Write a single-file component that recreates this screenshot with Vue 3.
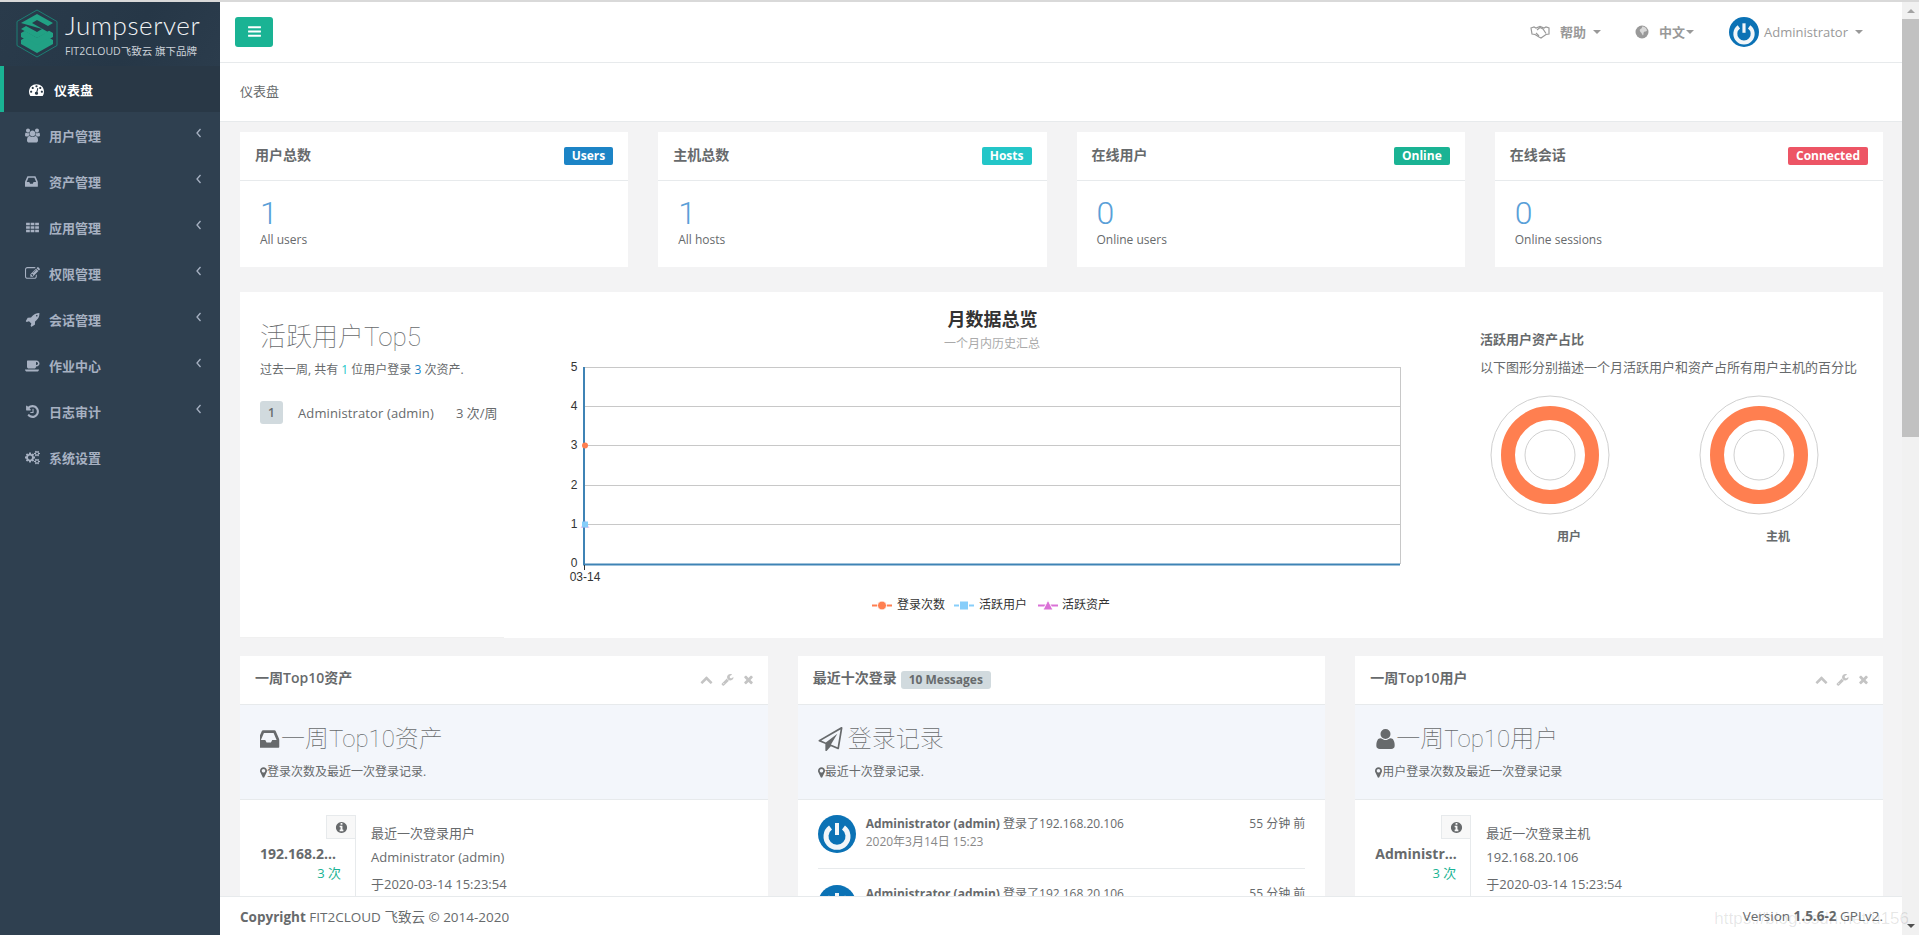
<script setup>
// FontAwesome 4 glyphs, 1792 grid
const fa = {
  dashboard: 'M384 1152q0-53-37.5-90.5t-90.5-37.5-90.5 37.5-37.5 90.5 37.5 90.5 90.5 37.5 90.5-37.5 37.5-90.5zm192-448q0-53-37.5-90.5t-90.5-37.5-90.5 37.5-37.5 90.5 37.5 90.5 90.5 37.5 90.5-37.5 37.5-90.5zm428 481l101-382q6-26-7.5-48.5t-38.5-29.5-48 6.5-30 39.5l-101 382q-60 5-107 43.5t-63 98.5q-20 77 20 146t117 89 146-20 89-117q16-60-6-117t-72-91zm660-33q0-53-37.5-90.5t-90.5-37.5-90.5 37.5-37.5 90.5 37.5 90.5 90.5 37.5 90.5-37.5 37.5-90.5zm-640-640q0-53-37.5-90.5t-90.5-37.5-90.5 37.5-37.5 90.5 37.5 90.5 90.5 37.5 90.5-37.5 37.5-90.5zm448 192q0-53-37.5-90.5t-90.5-37.5-90.5 37.5-37.5 90.5 37.5 90.5 90.5 37.5 90.5-37.5 37.5-90.5zm320 448q0 261-141 483-19 29-54 29h-1402q-35 0-54-29-141-221-141-483 0-182 71-348t191-286 286-191 348-71 348 71 286 191 191 286 71 348z',
  users: 'M593 896q-162 5-265 128h-134q-82 0-138-40.5t-56-118.5q0-353 124-353 6 0 43.5 21t97.5 42.5 119 21.5q67 0 133-23-5 37-5 66 0 139 81 256zm1071 637q0 120-73 189.5t-194 69.5h-874q-121 0-194-69.5t-73-189.5q0-53 3.5-103.5t14-109 26.5-108.5 43-97.5 62-81 85.5-53.5 111.5-20q10 0 43 21.5t73 48 107 48 135 21.5 135-21.5 107-48 73-48 43-21.5q61 0 111.5 20t85.5 53.5 62 81 43 97.5 26.5 108.5 14 109 3.5 103.5zm-1024-1277q0 106-75 181t-181 75-181-75-75-181 75-181 181-75 181 75 75 181zm704 384q0 159-112.5 271.5t-271.5 112.5-271.5-112.5-112.5-271.5 112.5-271.5 271.5-112.5 271.5 112.5 112.5 271.5zm576 225q0 78-56 118.5t-138 40.5h-134q-103-123-265-128 81-117 81-256 0-29-5-66 66 23 133 23 59 0 119-21.5t97.5-42.5 43.5-21q124 0 124 353zm-128-609q0 106-75 181t-181 75-181-75-75-181 75-181 181-75 181 75 75 181z',
  inbox: 'M1023 960h316q-1-3-2.5-8.5t-2.5-7.5l-212-496h-708l-212 496q-1 3-2.5 8.5t-2.5 7.5h316l95 192h320zm513 30v482q0 26-19 45t-45 19h-1408q-26 0-45-19t-19-45v-482q0-62 25-123l238-552q10-25 36.5-42t52.5-17h832q26 0 52.5 17t36.5 42l238 552q25 61 25 123z',
  th: 'M128 320h448v320h-448zM672 320h448v320h-448zM1216 320h448v320h-448zM128 736h448v320h-448zM672 736h448v320h-448zM1216 736h448v320h-448zM128 1152h448v320h-448zM672 1152h448v320h-448zM1216 1152h448v320h-448z',
  edit: 'M888 1184l116-116-152-152-116 116v56h96v96h56zm440-720q-16-16-33 1l-350 350q-17 17-1 33t33-1l350-350q17-17 1-33zm80 594v190q0 119-84.5 203.5t-203.5 84.5h-832q-119 0-203.5-84.5t-84.5-203.5v-832q0-119 84.5-203.5t203.5-84.5h832q63 0 117 25 15 7 18 23 3 17-9 29l-49 49q-14 14-32 8-23-6-45-6h-832q-66 0-113 47t-47 113v832q0 66 47 113t113 47h832q66 0 113-47t47-113v-126q0-13 9-22l64-64q15-15 35-7t20 29zm-96-738l288 288-672 672h-288v-288zm444 132l-92 92-288-288 92-92q28-28 68-28t68 28l152 152q28 28 28 68t-28 68z',
  rocket: 'M1504 448q0-40-28-68t-68-28-68 28-28 68 28 68 68 28 68-28 28-68zm224-288q0 249-75.5 430.5t-253.5 360.5q-81 80-195 176l-20 379q-2 16-16 26l-384 224q-7 4-16 4-12 0-23-9l-64-64q-13-14-8-32l85-276-281-281-276 85q-3 1-9 1-14 0-23-9l-64-64q-17-19-5-39l224-384q10-14 26-16l379-20q96-114 176-195 188-187 358-258t431-71q14 0 24 9.5t10 22.5z',
  coffee: 'M1600 640q0-80-56-136t-136-56h-64v384h64q80 0 136-56t56-136zm-1664 768h1792q0 106-75 181t-181 75h-1280q-106 0-181-75t-75-181zm1856-768q0 159-112.5 271.5t-271.5 112.5h-64v32q0 92-66 158t-158 66h-704q-92 0-158-66t-66-158v-736q0-26 19-45t45-19h1152q159 0 271.5 112.5t112.5 271.5z',
  history: 'M1664 896q0 156-61 298t-164 245-245 164-298 61q-172 0-327-72.5t-264-204.5q-7-10-6.5-22.5t8.5-20.5l137-138q10-9 25-9 16 2 23 12 73 95 179 147t225 52q104 0 198.5-40.5t163.5-109.5 109.5-163.5 40.5-198.5-40.5-198.5-109.5-163.5-163.5-109.5-198.5-40.5q-98 0-188 35.5t-160 101.5l137 138q31 30 14 69-17 40-59 40h-448q-26 0-45-19t-19-45v-448q0-42 40-59 39-17 69 14l130 129q107-101 244.5-156.5t284.5-55.5q156 0 298 61t245 164 164 245 61 298zm-640-288v448q0 14-9 23t-23 9h-320q-14 0-23-9t-9-23v-64q0-14 9-23t23-9h224v-352q0-14 9-23t23-9h64q14 0 23 9t9 23z',
  cogs: 'M896 896q0-106-75-181t-181-75-181 75-75 181 75 181 181 75 181-75 75-181zm768 512q0-52-38-90t-90-38-90 38-38 90q0 53 37.5 90.5t90.5 37.5 90.5-37.5 37.5-90.5zm0-1024q0-52-38-90t-90-38-90 38-38 90q0 53 37.5 90.5t90.5 37.5 90.5-37.5 37.5-90.5zm-384 421v185q0 10-7 19.5t-16 10.5l-155 24q-11 35-32 76 34 48 90 115 7 11 7 20 0 12-7 19-23 30-82.5 89.5t-78.5 59.5q-11 0-21-7l-115-90q-37 19-77 31-11 108-23 155-7 24-30 24h-186q-11 0-20-7.5t-10-17.5l-23-153q-34-10-75-31l-118 89q-7 7-20 7-11 0-21-8-144-133-144-160 0-9 7-19 10-14 41-53t47-61q-23-44-35-82l-152-24q-10-1-17-9.5t-7-19.5v-185q0-10 7-19.5t16-10.5l155-24q11-35 32-76-34-48-90-115-7-11-7-20 0-12 7-20 22-30 82-89t79-59q11 0 21 7l115 90q34-18 77-32 11-108 23-154 7-24 30-24h186q11 0 20 7.5t10 17.5l23 153q34 10 75 31l118-89q8-7 20-7 11 0 21 8 144 133 144 160 0 8-7 19-12 16-42 54t-45 60q23 48 34 82l152 23q10 2 17 10.5t7 19.5zm640 533v140q0 16-149 31-12 27-30 52 51 113 51 138 0 4-4 7-122 71-124 71-8 0-46-47t-52-68q-20 2-30 2t-30-2q-14 21-52 68t-46 47q-2 0-124-71-4-3-4-7 0-25 51-138-18-25-30-52-149-15-149-31v-140q0-16 149-31 13-29 30-52-51-113-51-138 0-4 4-7 4-2 35-20t59-34 30-16q8 0 46 46.5t52 67.5q20-2 30-2t30 2q51-71 92-112l6-2q4 0 124 70 4 3 4 7 0 25-51 138 17 23 30 52 149 15 149 31zm0-1024v140q0 16-149 31-12 27-30 52 51 113 51 138 0 4-4 7-122 71-124 71-8 0-46-47t-52-68q-20 2-30 2t-30-2q-14 21-52 68t-46 47q-2 0-124-71-4-3-4-7 0-25 51-138-18-25-30-52-149-15-149-31v-140q0-16 149-31 13-29 30-52-51-113-51-138 0-4 4-7 4-2 35-20t59-34 30-16q8 0 46 46.5t52 67.5q20-2 30-2t30 2q51-71 92-112l6-2q4 0 124 70 4 3 4 7 0 25-51 138 17 23 30 52 149 15 149 31z',
  bars: 'M1664 1344v128q0 26-19 45t-45 19h-1408q-26 0-45-19t-19-45v-128q0-26 19-45t45-19h1408q26 0 45 19t19 45zm0-512v128q0 26-19 45t-45 19h-1408q-26 0-45-19t-19-45v-128q0-26 19-45t45-19h1408q26 0 45 19t19 45zm0-512v128q0 26-19 45t-45 19h-1408q-26 0-45-19t-19-45v-128q0-26 19-45t45-19h1408q26 0 45 19t19 45z',
  up: 'M1683 1331l-166 165q-19 19-45 19t-45-19l-531-531-531 531q-19 19-45 19t-45-19l-166-165q-19-19-19-45.5t19-45.5l742-741q19-19 45-19t45 19l742 741q19 19 19 45.5t-19 45.5z',
  wrench: 'M448 1472q0-26-19-45t-45-19-45 19-19 45 19 45 45 19 45-19 19-45zm644-420l-682 682q-37 37-90 37-52 0-91-37l-106-108q-38-36-38-90 0-53 38-91l681-681q39 98 114.5 173.5t173.5 114.5zm634-435q0 39-23 106-47 134-164.5 217.5t-258.5 83.5q-185 0-316.5-131.5t-131.5-316.5 131.5-316.5 316.5-131.5q58 0 121.5 16.5t107.5 46.5q16 11 16 28t-16 28l-293 169v224l193 107q5-3 79-48.5t135.5-81 70.5-35.5q15 0 23.5 10t8.5 25z',
  times: 'M1490 1322q0 40-28 68l-136 136q-28 28-68 28t-68-28l-294-294-294 294q-28 28-68 28t-68-28l-136-136q-28-28-28-68t28-68l294-294-294-294q-28-28-28-68t28-68l136-136q28-28 68-28t68 28l294 294 294-294q28-28 68-28t68 28l136 136q28 28 28 68t-28 68l-294 294 294 294q28 28 28 68z',
  info: 'M1152 1376v-160q0-14-9-23t-23-9h-96v-512q0-14-9-23t-23-9h-320q-14 0-23 9t-9 23v160q0 14 9 23t23 9h96v320h-96q-14 0-23 9t-9 23v160q0 14 9 23t23 9h448q14 0 23-9t9-23zm-128-896v-160q0-14-9-23t-23-9h-192q-14 0-23 9t-9 23v160q0 14 9 23t23 9h192q14 0 23-9t9-23zm640 416q0 209-103 385.5t-279.5 279.5-385.5 103-385.5-103-279.5-279.5-103-385.5 103-385.5 279.5-279.5 385.5-103 385.5 103 279.5 279.5 103 385.5z',
  marker: 'M1152 640q0-106-75-181t-181-75-181 75-75 181 75 181 181 75 181-75 75-181zm256 0q0 109-33 179l-364 774q-16 33-47.5 52t-67.5 19-67.5-19-46.5-52l-365-774q-33-70-33-179 0-212 150-362t362-150 362 150 150 362z',
  plane: 'M1764 11q33 24 27 64l-256 1536q-5 29-32 45-14 8-31 8-11 0-24-5l-527-215-298 327q-18 21-47 21-14 0-23-4-19-7-30-23.5t-11-36.5v-452l-472-193q-37-14-40-55-3-39 32-59l1664-960q35-21 68 2zm-342 1499l221-1323-1434 827 336 137 863-639-478 797z',
  user: 'M1600 1405q0 120-73 189.5t-194 69.5h-874q-121 0-194-69.5t-73-189.5q0-53 3.5-103.5t14-109 26.5-108.5 43-97.5 62-81 85.5-53.5 111.5-20q9 0 42 21.5t74.5 48 108 48 133.5 21.5 133.5-21.5 108-48 74.5-48 42-21.5q61 0 111.5 20t85.5 53.5 62 81 43 97.5 26.5 108.5 14 109 3.5 103.5zm-320-893q0 159-112.5 271.5t-271.5 112.5-271.5-112.5-112.5-271.5 112.5-271.5 271.5-112.5 271.5 112.5 112.5 271.5z',
}

const menu = [
  { name: '用户管理', icon: 'users', box: '0 0 1920 1792' },
  { name: '资产管理', icon: 'inbox' },
  { name: '应用管理', icon: 'th' },
  { name: '权限管理', icon: 'edit' },
  { name: '会话管理', icon: 'rocket' },
  { name: '作业中心', icon: 'coffee', box: '-64 0 1920 1792' },
  { name: '日志审计', icon: 'history' },
  { name: '系统设置', icon: 'cogs', box: '0 0 1920 1792', leaf: true },
]

const stats = [
  { title: '用户总数', tag: 'Users', color: '#1c84c6', value: 1, note: 'All users' },
  { title: '主机总数', tag: 'Hosts', color: '#23c6c8', value: 1, note: 'All hosts' },
  { title: '在线用户', tag: 'Online', color: '#1ab394', value: 0, note: 'Online users' },
  { title: '在线会话', tag: 'Connected', color: '#ed5565', value: 0, note: 'Online sessions' },
]

// y position of each value on the chart
const axis = [
  { label: '5', y: 15.5 },
  { label: '4', y: 54.5 },
  { label: '3', y: 93.5 },
  { label: '2', y: 133.5 },
  { label: '1', y: 172.5 },
]

const donuts = ['用户', '主机']

const logins = [1, 2]
</script>

<template>
  <div class="page">
    <aside class="sidebar">
      <div class="brand">
        <svg class="brand-logo" viewBox="0 0 46 54">
          <path d="M23 4l20 11.500v24L23 51 3 39.500v-24z" fill="none" stroke="#1c7f74" stroke-width="1" />
          <path d="M7 27l4-2.300 12 7 12-7 4 2.300v4L23 40 7 31z" fill="#21a184" />
          <path d="M7 34l4-2.300 12 7 12-7 4 2.300v4L23 47 7 38z" fill="#21a184" />
          <path d="M23 8l16 9-5 3-11-6-5 3 16 9-11 6-16-9 5-3 11 6 5-3L7 17z" fill="#21a184" />
        </svg>
        <div class="brand-text">
          <div class="brand-name">Jumpserver</div>
          <div class="brand-sub">FIT2CLOUD飞致云 旗下品牌</div>
        </div>
      </div>
      <a class="nav-item active">
        <svg class="nav-icon" viewBox="0 0 1792 1792"><path :d="fa.dashboard" /></svg>
        <span>仪表盘</span>
      </a>
      <a v-for="item in menu" :key="item.name" class="nav-item">
        <svg class="nav-icon" :viewBox="item.box || '0 0 1792 1792'"><path :d="fa[item.icon]" /></svg>
        <span>{{ item.name }}</span>
        <svg v-if="!item.leaf" class="nav-arrow" viewBox="0 0 6 10"><path d="M4.500 1L1 5l3.500 4" /></svg>
      </a>
    </aside>

    <div class="main">
      <header class="topbar">
        <button class="toggle">
          <svg viewBox="0 0 1792 1792"><path :d="fa.bars" /></svg>
        </button>
        <div class="top-links">
          <a class="top-link help">
            <svg class="shake" viewBox="0 0 20 14">
              <path d="M1 3l3-1 2 1 4-1.500L14 3l2-1 3 1v6l-3 .5-5 3.500-2-1-4-2.500-3-.5z" />
              <path d="M7 5l3-2.500 3 1.500 3 4.500M6 8l3 3" />
            </svg>
            <b>帮助</b><i class="caret"></i>
          </a>
          <a class="top-link lang">
            <svg class="globe" viewBox="0 0 14 14">
              <circle cx="7" cy="7" r="6.500" fill="#999" />
              <path d="M7 1.500c2.500 0 4.500 1.500 5 4-1 1.500-2 .5-3 1.500s0 2-1 3.500c-1-1-1-2-2-3S4 5 5.500 4 7 3 7 1.500z" fill="#d9d9d9" />
            </svg>
            <b>中文</b><i class="caret tight"></i>
          </a>
          <a class="top-link account">
            <svg class="avatar small" viewBox="0 0 38 38">
              <circle cx="19" cy="19" r="19" fill="#0b72b5" />
              <path d="M12.500 12.500a11 11 0 1 0 13 0" fill="none" stroke="#f2f6f9" stroke-width="5" />
              <path d="M19 8v12" stroke="#f2f6f9" stroke-width="4" />
            </svg>
            <span>Administrator</span><i class="caret"></i>
          </a>
        </div>
      </header>

      <div class="crumb">仪表盘</div>

      <div class="content">
        <section class="stat-row">
          <div v-for="card in stats" :key="card.tag" class="card">
            <div class="card-head">
              <strong>{{ card.title }}</strong>
              <span class="tag" :style="{ background: card.color }">{{ card.tag }}</span>
            </div>
            <div class="card-body">
              <div class="big-num">{{ card.value }}</div>
              <small>{{ card.note }}</small>
            </div>
          </div>
        </section>

        <section class="overview">
          <div class="top-users">
            <h2>活跃用户Top5</h2>
            <p>过去一周, 共有 <span class="cyan">1</span> 位用户登录 <span class="blue">3</span> 次资产.</p>
            <div class="top-row">
              <span class="rank">1</span>
              <span class="top-name">Administrator (admin)</span>
              <span>3 次/周</span>
            </div>
          </div>

          <div class="chart">
            <h3>月数据总览</h3>
            <div class="chart-sub">一个月内历史汇总</div>
            <svg class="chart-svg" width="920" height="270" viewBox="0 0 920 270">
              <g v-for="tick in axis" :key="tick.label">
                <line x1="53" x2="869" :y1="tick.y" :y2="tick.y" stroke="#c8c8c8" />
                <text x="43" :y="tick.y + 3" text-anchor="middle">{{ tick.label }}</text>
              </g>
              <line x1="869.500" x2="869.500" y1="15" y2="212" stroke="#c8c8c8" />
              <line x1="53" x2="53" y1="15" y2="213" stroke="#3f83b5" stroke-width="2" />
              <line x1="52" x2="869" y1="212.500" y2="212.500" stroke="#3f83b5" stroke-width="2" />
              <line x1="53.500" x2="53.500" y1="213" y2="218" stroke="#333" />
              <text x="43" y="215" text-anchor="middle">0</text>
              <text x="54" y="229" text-anchor="middle">03-14</text>
              <circle cx="54" cy="93.500" r="3" fill="#ff7f50" />
              <path d="M54 168l4.500 8h-9z" fill="#da70d6" opacity=".4" />
              <rect x="51" y="169.500" width="6" height="6" fill="#87cefa" />

              <g stroke-width="2">
                <line x1="341" x2="361" y1="253.500" y2="253.500" stroke="#ff7f50" />
                <line x1="423" x2="443" y1="253.500" y2="253.500" stroke="#87cefa" />
                <line x1="507" x2="527" y1="253.500" y2="253.500" stroke="#da70d6" />
              </g>
              <circle cx="351" cy="253.500" r="4.500" fill="#ff7f50" stroke="#fff" />
              <rect x="428.500" y="249" width="9" height="9" fill="#87cefa" stroke="#fff" />
              <path d="M517 248l5 10h-10z" fill="#da70d6" stroke="#fff" />
              <text x="366" y="257">登录次数</text>
              <text x="448" y="257">活跃用户</text>
              <text x="531" y="257">活跃资产</text>
            </svg>
          </div>

          <div class="ratio">
            <strong>活跃用户资产占比</strong>
            <p>以下图形分别描述一个月活跃用户和资产占所有用户主机的百分比</p>
            <div class="donuts">
              <figure v-for="name in donuts" :key="name">
                <svg width="120" height="120" viewBox="0 0 120 120">
                  <circle cx="60" cy="60" r="59" fill="none" stroke="#d0d0d0" />
                  <circle cx="60" cy="60" r="42" fill="none" stroke="#ff7f50" stroke-width="14" />
                  <circle cx="60" cy="60" r="25" fill="none" stroke="#d0d0d0" />
                </svg>
                <figcaption>{{ name }}</figcaption>
              </figure>
            </div>
          </div>
        </section>

        <section class="panel-row">
          <div class="panel">
            <div class="panel-head">
              <strong>一周Top10资产</strong>
              <div class="tools">
                <svg viewBox="0 0 1792 1792"><path :d="fa.up" /></svg>
                <svg viewBox="0 0 1792 1792"><path :d="fa.wrench" /></svg>
                <svg viewBox="0 0 1792 1792"><path :d="fa.times" /></svg>
              </div>
            </div>
            <div class="panel-intro">
              <h2><svg viewBox="128 256 1536 1280"><path :d="fa.inbox" /></svg>一周Top10资产</h2>
              <small><svg viewBox="384 128 1024 1536"><path :d="fa.marker" /></svg>登录次数及最近一次登录记录.</small>
            </div>
            <div class="record">
              <div class="record-side">
                <div class="record-info"><svg viewBox="0 0 1792 1792"><path :d="fa.info" /></svg></div>
                <div class="record-name">192.168.20.106</div>
                <div class="record-count">3 次</div>
              </div>
              <div class="record-main">
                <p>最近一次登录用户</p>
                <p>Administrator (admin)</p>
                <p class="when">于2020-03-14 15:23:54</p>
              </div>
            </div>
          </div>

          <div class="panel">
            <div class="panel-head">
              <strong>最近十次登录</strong>
              <span class="msg-tag">10 Messages</span>
            </div>
            <div class="panel-intro">
              <h2><svg class="plane" viewBox="0 0 1792 1792"><path :d="fa.plane" /></svg>登录记录</h2>
              <small><svg viewBox="384 128 1024 1536"><path :d="fa.marker" /></svg>最近十次登录记录.</small>
            </div>
            <div class="feed">
              <div v-for="n in logins" :key="n" class="feed-item">
                <svg class="avatar" viewBox="0 0 38 38">
                  <circle cx="19" cy="19" r="19" fill="#0b72b5" />
                  <path d="M12.500 12.500a11 11 0 1 0 13 0" fill="none" stroke="#f2f6f9" stroke-width="5" />
                  <path d="M19 8v12" stroke="#f2f6f9" stroke-width="4" />
                </svg>
                <div class="feed-text">
                  <div class="feed-line">
                    <span><strong>Administrator (admin)</strong> 登录了192.168.20.106</span>
                    <span>55 分钟 前</span>
                  </div>
                  <div class="feed-date">2020年3月14日 15:23</div>
                </div>
              </div>
            </div>
          </div>

          <div class="panel">
            <div class="panel-head">
              <strong>一周Top10用户</strong>
              <div class="tools">
                <svg viewBox="0 0 1792 1792"><path :d="fa.up" /></svg>
                <svg viewBox="0 0 1792 1792"><path :d="fa.wrench" /></svg>
                <svg viewBox="0 0 1792 1792"><path :d="fa.times" /></svg>
              </div>
            </div>
            <div class="panel-intro">
              <h2><svg viewBox="128 128 1536 1536"><path :d="fa.user" /></svg>一周Top10用户</h2>
              <small><svg viewBox="384 128 1024 1536"><path :d="fa.marker" /></svg>用户登录次数及最近一次登录记录</small>
            </div>
            <div class="record">
              <div class="record-side">
                <div class="record-info"><svg viewBox="0 0 1792 1792"><path :d="fa.info" /></svg></div>
                <div class="record-name">Administrator (admin)</div>
                <div class="record-count">3 次</div>
              </div>
              <div class="record-main">
                <p>最近一次登录主机</p>
                <p>192.168.20.106</p>
                <p class="when">于2020-03-14 15:23:54</p>
              </div>
            </div>
          </div>
        </section>
      </div>

      <footer class="footer">
        <div><strong>Copyright</strong> FIT2CLOUD 飞致云 © 2014-2020</div>
        <div>Version <strong>1.5.6-2</strong> GPLv2.</div>
      </footer>
    </div>

    <div class="scrollbar">
      <i class="arrow-up"></i>
      <div class="thumb"></div>
      <i class="arrow-down"></i>
    </div>

    <div class="watermark">https://blog.csdn.net/u156</div>
  </div>
</template>

<style scoped>
.page {
  position: relative;
  display: flex;
  height: 935px;
  box-sizing: border-box;
  border-top: 2px solid #d9d9d9;
  overflow: hidden;
  background: #f3f3f4;
  color: #676a6c;
  font-family: "Open Sans", "Noto Sans CJK SC", sans-serif;
  font-size: 13px;
}

/* sidebar */
.sidebar {
  width: 220px;
  flex: none;
  background: #2f4050;
}
.brand {
  display: flex;
  align-items: flex-start;
  height: 64px;
  box-sizing: border-box;
  padding: 4px 0 0 14px;
  background: linear-gradient(120deg, #2a3b4b 0%, #263747 60%, #2b3c4c 100%);
}
.brand-logo {
  width: 46px;
  height: 54px;
  flex: none;
}
.brand-text {
  margin-left: 5px;
  padding-top: 3px;
}
.brand-name {
  font-family: Lato, sans-serif;
  font-weight: 300;
  font-size: 26px;
  line-height: 32px;
  letter-spacing: .6px;
  color: #f1f3f5;
}
.brand-sub {
  font-size: 10.500px;
  line-height: 14px;
  margin-top: 3px;
  color: #cdd3da;
  white-space: nowrap;
}
.nav-item {
  display: flex;
  align-items: center;
  height: 46px;
  padding-left: 25px;
  font-weight: 600;
  color: #a7b1c2;
}
.nav-icon {
  width: 15px;
  height: 15px;
  margin-right: 9px;
  fill: #a7b1c2;
}
.nav-arrow {
  width: 6px;
  height: 10px;
  margin-left: 95px;
  margin-top: -5px;
  fill: none;
  stroke: #a7b1c2;
  stroke-width: 1.300;
}
.nav-item.active {
  background: #293846;
  border-left: 4px solid #1ab394;
  padding-left: 25px;
  color: #fff;
}
.nav-item.active .nav-icon {
  fill: #fff;
  margin-right: 10px;
}

/* top */
.main {
  flex: 1;
  min-width: 0;
  display: flex;
  flex-direction: column;
}
.topbar {
  flex: none;
  height: 61px;
  box-sizing: border-box;
  display: flex;
  align-items: center;
  justify-content: space-between;
  padding: 0 39px 1px 15px;
  background: #fff;
  border-bottom: 1px solid #e7eaec;
}
.toggle {
  width: 38px;
  height: 30px;
  padding: 0;
  border: 0;
  border-radius: 3px;
  background: #1ab394;
}
.toggle svg {
  display: block;
  width: 15px;
  height: 15px;
  margin: auto;
  fill: #fff;
}
.top-links {
  display: flex;
  align-items: center;
  color: #999;
}
.top-link {
  display: flex;
  align-items: center;
}
.top-link b {
  font-weight: 600;
}
.shake {
  width: 20px;
  height: 14px;
  margin-right: 10px;
  fill: none;
  stroke: #999;
  stroke-width: 1.200;
}
.globe {
  width: 14px;
  height: 14px;
  margin-right: 10px;
}
.help {
  margin-right: 34px;
}
.lang {
  margin-right: 35px;
}
.caret {
  width: 0;
  height: 0;
  margin-left: 7px;
  border-top: 4px solid #999;
  border-left: 4px solid transparent;
  border-right: 4px solid transparent;
}
.caret.tight {
  margin-left: 1px;
}
.avatar {
  width: 38px;
  height: 38px;
  flex: none;
}
.avatar.small {
  width: 30px;
  height: 30px;
  margin-right: 5px;
}
.crumb {
  flex: none;
  height: 59px;
  box-sizing: border-box;
  padding-left: 20px;
  line-height: 56px;
  background: #fff;
  border-bottom: 1px solid #e7eaec;
}

.content {
  flex: 1;
  min-height: 0;
  overflow: hidden;
  padding: 10px 19px 0 20px;
}

/* stat cards */
.stat-row {
  display: grid;
  grid-template-columns: repeat(4, 1fr);
  gap: 30px;
}
.card {
  height: 135px;
  background: #fff;
}
.card-head {
  height: 49px;
  box-sizing: border-box;
  padding: 0 15px;
  display: flex;
  align-items: center;
  justify-content: space-between;
  border-bottom: 1px solid #e7eaec;
}
.card-head strong {
  font-size: 14px;
  font-weight: 600;
  margin-top: -5px;
}
.tag {
  height: 18px;
  line-height: 18px;
  padding: 0 8px;
  border-radius: 2px;
  font-size: 12px;
  font-weight: 700;
  color: #fff;
}
.card-body {
  padding: 9px 20px 0;
}
.big-num {
  font-family: Roboto, "Open Sans", sans-serif;
  font-size: 32px;
  font-weight: 300;
  line-height: 46px;
  color: #5a9fd8;
}
.card-body small {
  display: block;
  font-size: 12px;
  line-height: 16px;
  margin-top: -4px;
}

/* overview */
.overview {
  margin-top: 25px;
  height: 346px;
  display: grid;
  grid-template-columns: 264px 27px 920px 1fr;
  background: #fff;
}
.top-users {
  box-sizing: border-box;
  border-bottom: 1px solid #f0f0f0;
  padding: 28px 0 0 20px;
}
.top-users h2 {
  margin: 0;
  font-family: Roboto, "Noto Sans CJK SC", sans-serif;
  font-size: 26px;
  font-weight: 100;
  line-height: 34px;
}
.top-users p {
  margin: 8px 0 0;
  font-size: 12px;
  line-height: 16px;
}
.cyan {
  color: #23c6c8;
}
.blue {
  color: #1c84c6;
}
.top-row {
  display: flex;
  align-items: center;
  margin-top: 23px;
  white-space: nowrap;
}
.rank {
  width: 23px;
  height: 23px;
  line-height: 23px;
  text-align: center;
  border-radius: 3px;
  background: #d1dade;
  font-size: 12px;
  font-weight: 600;
  margin-right: 15px;
}
.top-name {
  width: 158px;
  letter-spacing: .12px;
}
.chart {
  grid-column: 3;
  padding-top: 15px;
  text-align: center;
}
.chart h3 {
  margin: 0;
  padding-left: 3px;
  font-size: 18px;
  font-weight: 600;
  line-height: 24px;
  color: #333;
}
.chart-sub {
  margin-top: 4px;
  padding-left: 2px;
  font-size: 12px;
  line-height: 18px;
  color: #aaa;
}
.chart-svg {
  display: block;
  margin-top: -1px;
}
.chart-svg text {
  font-family: "Liberation Sans", "Noto Sans CJK SC", sans-serif;
  font-size: 12px;
  fill: #333;
}
.ratio {
  padding: 38px 0 0 29px;
}
.ratio strong {
  display: block;
  font-weight: 600;
  line-height: 18px;
}
.ratio p {
  margin: 10px 0 0;
  line-height: 18px;
  white-space: nowrap;
}
.donuts {
  display: flex;
  gap: 89px;
  margin: 19px 0 0 10px;
}
.donuts figure {
  margin: 0;
}
.donuts svg {
  display: block;
}
.donuts figcaption {
  margin: 13px 0 0 38px;
  text-align: center;
  font-size: 12px;
  font-weight: 600;
  line-height: 18px;
}

/* bottom panels */
.panel-row {
  margin-top: 18px;
  display: grid;
  grid-template-columns: repeat(3, 1fr);
  gap: 30px;
}
.panel {
  background: #fff;
  height: 240px;
}
.panel-head {
  height: 49px;
  box-sizing: border-box;
  padding: 0 15px;
  display: flex;
  align-items: center;
  border-bottom: 1px solid #e7eaec;
}
.panel-head strong {
  font-size: 14px;
  font-weight: 600;
  margin-top: -6px;
}
.tools {
  margin: -2px -2px 0 auto;
  display: flex;
  gap: 8px;
}
.tools svg {
  width: 13px;
  height: 13px;
  fill: #c4c4c4;
}
.msg-tag {
  margin: 0 0 0 4px;
  height: 18px;
  line-height: 18px;
  padding: 0 8px;
  border-radius: 3px;
  background: #d1dade;
  font-size: 12px;
  font-weight: 700;
}
.panel-intro {
  height: 95px;
  box-sizing: border-box;
  padding: 17px 20px 0;
  background: #f3f6fb;
  border-bottom: 1px solid #e7eaec;
}
.panel-intro h2 {
  display: flex;
  align-items: center;
  margin: 0;
  font-family: Roboto, "Noto Sans CJK SC", sans-serif;
  font-size: 24px;
  font-weight: 100;
  line-height: 34px;
}
.panel-intro h2 svg {
  width: 21px;
  height: 20px;
  fill: #676a6c;
}
.panel-intro h2 .plane {
  width: 25px;
  height: 24px;
  margin-right: 5px;
}
.panel-intro small {
  display: flex;
  align-items: center;
  margin-top: 7px;
  font-size: 12px;
  line-height: 18px;
}
.panel-intro small svg {
  width: 7px;
  height: 11px;
  margin-right: 0;
  fill: #676a6c;
}
.record {
  display: flex;
  padding: 15px 20px 0;
}
.record-side {
  width: 96px;
  height: 90px;
  flex: none;
  box-sizing: border-box;
  border-right: 1px solid #e7eaec;
}
.record-info {
  width: 30px;
  height: 24px;
  margin-left: auto;
  margin-right: -1px;
  box-sizing: border-box;
  display: flex;
  align-items: center;
  justify-content: center;
  background: #f8f8f8;
  border: 1px solid #e7eaec;
}
.record-info svg {
  width: 13px;
  height: 13px;
  fill: #676a6c;
}
.record-name {
  width: 82px;
  margin-top: 5px;
  font-size: 14px;
  font-weight: 700;
  line-height: 20px;
  white-space: nowrap;
  overflow: hidden;
  text-overflow: ellipsis;
}
.record-count {
  padding-right: 14px;
  text-align: right;
  line-height: 18px;
  color: #1ab394;
}
.record-main {
  padding: 9px 0 0 15px;
}
.record-main p {
  margin: 0 0 6px;
  line-height: 18px;
}
.record-main .when {
  margin-top: 9px;
}
.feed {
  padding: 15px 20px 0;
}
.feed-item {
  display: flex;
  height: 53px;
  margin-bottom: 16px;
  border-bottom: 1px solid #e7eaec;
}
.feed-text {
  flex: 1;
  margin-left: 10px;
}
.feed-line {
  display: flex;
  justify-content: space-between;
  font-size: 12px;
  line-height: 18px;
}
.feed-line strong {
  font-weight: 700;
}
.feed-date {
  font-size: 12px;
  line-height: 18px;
  color: #888;
}

.footer {
  flex: none;
  height: 39px;
  box-sizing: border-box;
  padding: 0 19px 0 20px;
  display: flex;
  align-items: center;
  justify-content: space-between;
  background: #fff;
  border-top: 1px solid #e7eaec;
  font-size: 13.500px;
}
.footer strong {
  font-weight: 700;
}

/* fake window scrollbar */
.scrollbar {
  width: 17px;
  flex: none;
  display: flex;
  flex-direction: column;
  align-items: center;
  background: #f1f1f1;
}
.thumb {
  width: 100%;
  height: 418px;
  margin-top: 6px;
  background: #c1c1c1;
}
.arrow-up,
.arrow-down {
  width: 0;
  height: 0;
  border-left: 4px solid transparent;
  border-right: 4px solid transparent;
}
.arrow-up {
  margin-top: 7px;
  border-bottom: 4px solid #a3a3a3;
}
.arrow-down {
  margin-top: auto;
  margin-bottom: 7px;
  border-top: 4px solid #505050;
}

.watermark {
  position: absolute;
  right: 10px;
  bottom: 6px;
  font-family: "Liberation Sans", sans-serif;
  font-size: 17px;
  color: rgba(0, 0, 0, 0.1);
  pointer-events: none;
}
</style>

<style>
html, body {
  margin: 0;
  overflow: hidden;
}
</style>
